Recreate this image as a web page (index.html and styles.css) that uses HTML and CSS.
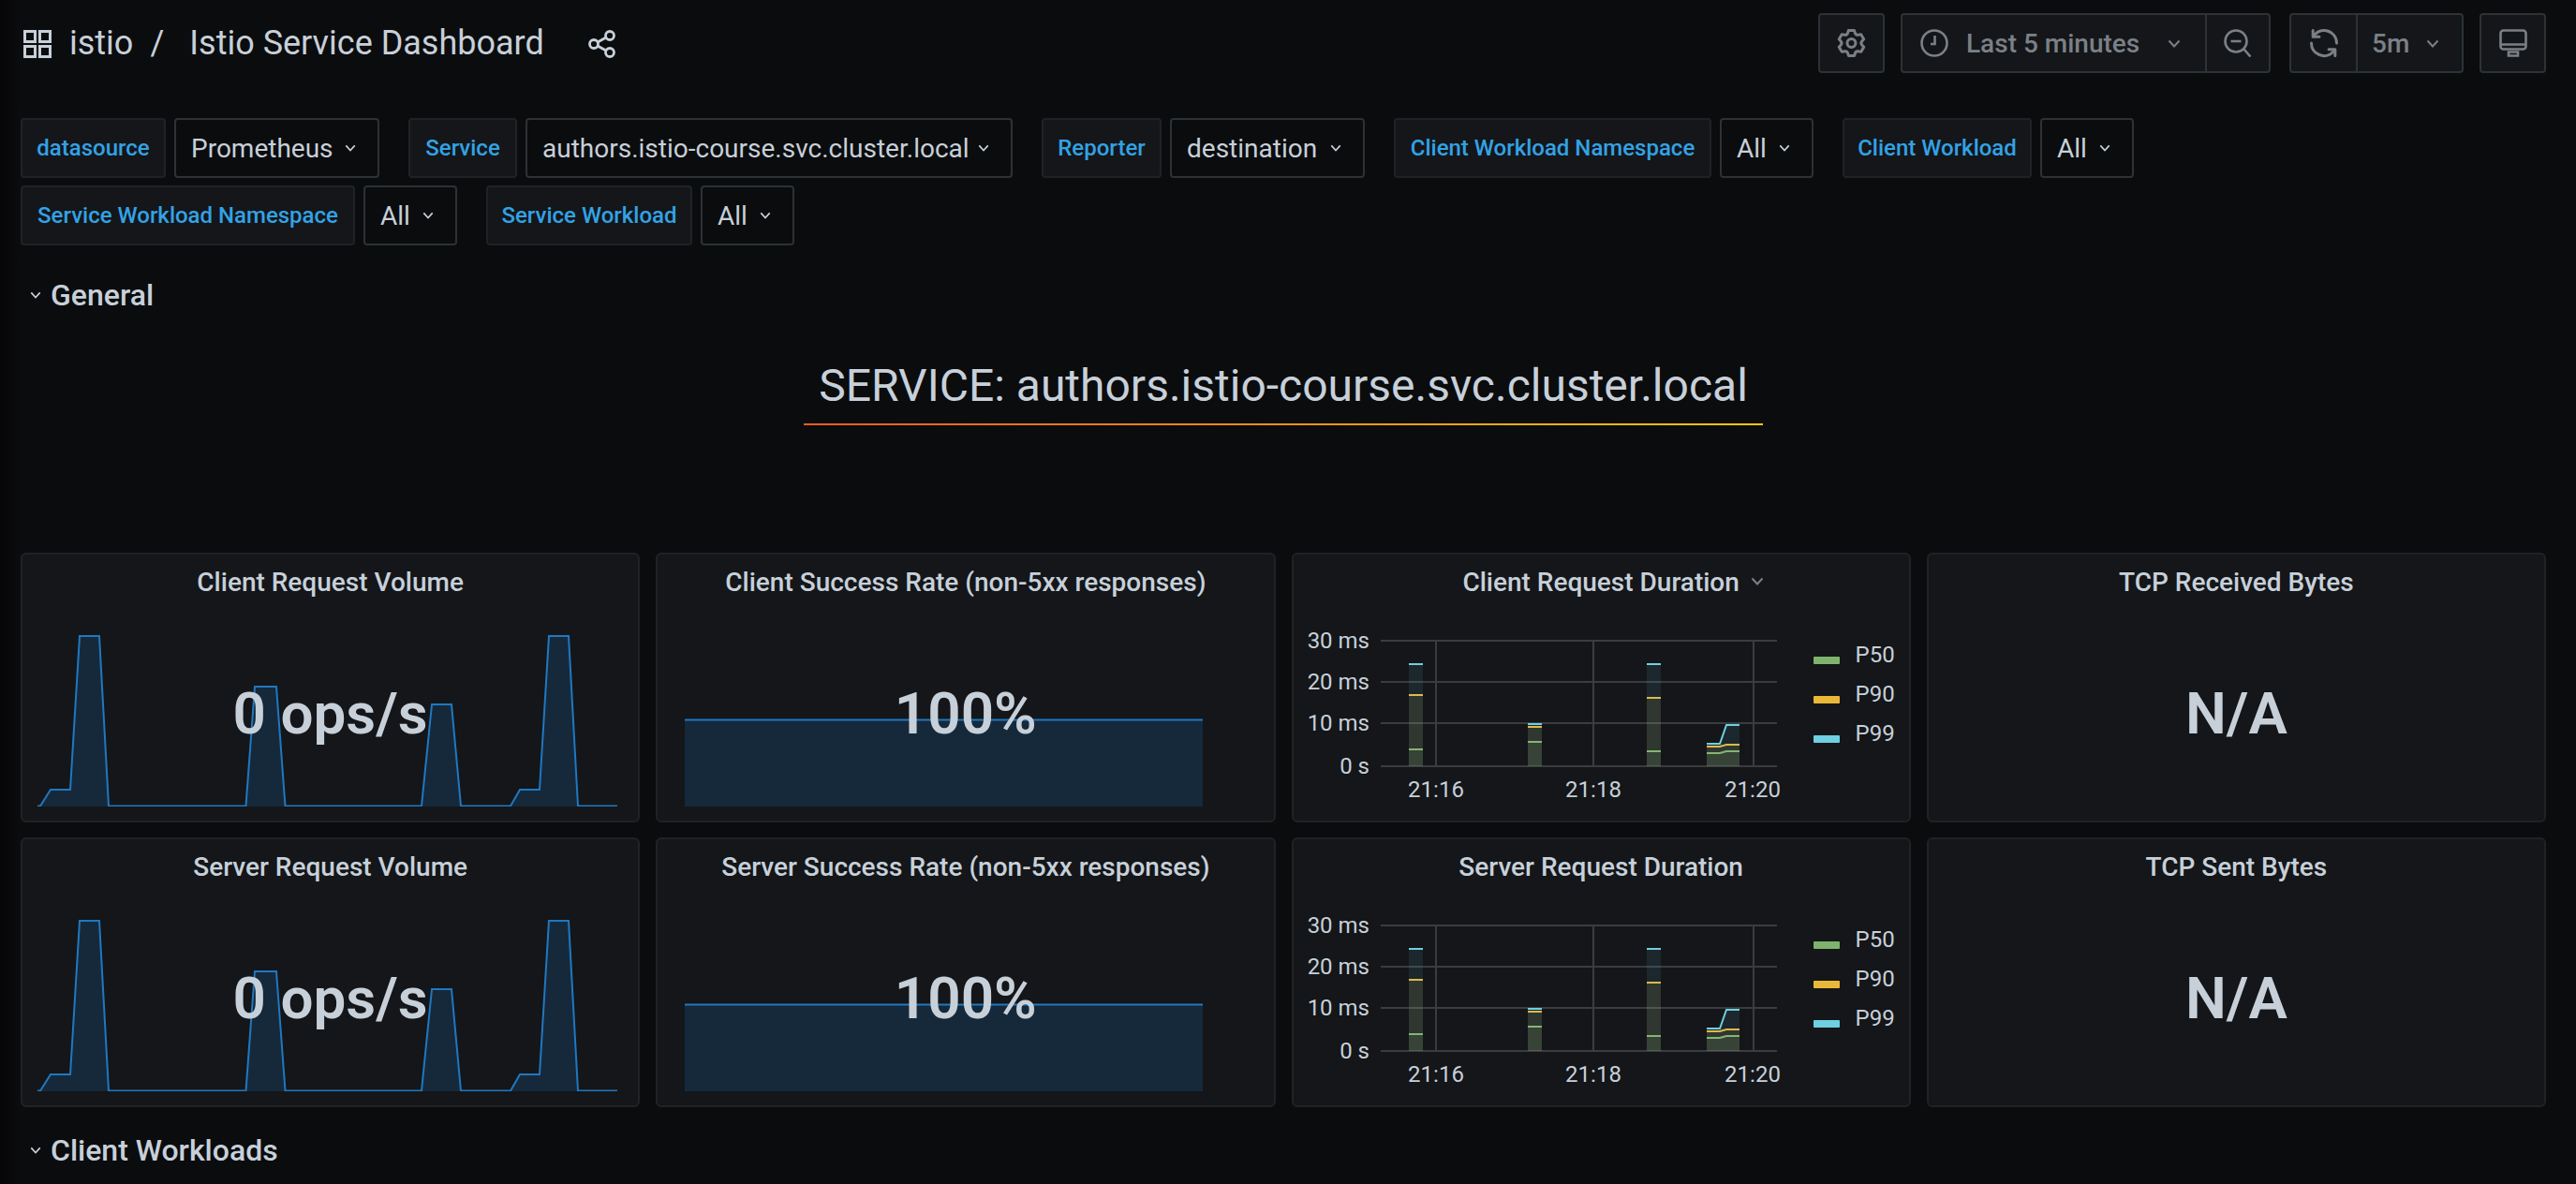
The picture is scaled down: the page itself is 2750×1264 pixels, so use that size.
FILE: index.html
```html
<!DOCTYPE html>
<html lang="en">
<head>
  <meta charset="UTF-8" />
  <title>Istio Service Dashboard</title>
  <link rel="stylesheet" href="styles.css">
</head>
<body>

  <!-- shared drawings, same data in both rows -->
  <svg class="defs" aria-hidden="true">
    <symbol id="chev" viewBox="0 0 14 9">
      <path d="M1.5 1.5 7 7.5l5.5-6" fill="none" stroke="currentColor" stroke-width="2"/>
    </symbol>
    <symbol id="spark" viewBox="0 0 625 210">
      <path class="spark-fill" d="M3 210 14 192H35L45 28H66L76 210ZM222.500 210 232 82H255L264.500 210ZM410 210 421 101H442L452 210ZM505 210 515 192H536L546 28H567L577 210Z"/>
      <path class="spark-line" d="M0 209.500H3L14 192H35L45 28H66L76 209.500H222.500L232 82H255L264.500 209.500H410L421 101H442L452 209.500H505L515 192H536L546 28H567L577 209.500H619"/>
    </symbol>
    <symbol id="flat" viewBox="0 0 625 210">
      <rect class="spark-fill" x="13" y="117" width="553" height="93"/>
      <path class="spark-line" d="M13 117.500H566"/>
    </symbol>
    <symbol id="series" viewBox="0 0 540 210">
      <g class="grid">
        <path d="M78 33H501M78 77H501M78 121H501M78 167H501"/>
        <path d="M137 33V167M305 33V167M476 33V167"/>
      </g>
      <g class="p50">
        <path class="area" d="M108 149H123V167H108ZM235 141H250V167H235ZM362 151H377V167H362ZM426 153H440L447 151H461V167H426Z"/>
        <path class="ln" d="M108 149H123M235 141H250M362 151H377M426 153H440L447 151H461"/>
      </g>
      <g class="p90">
        <path class="area" d="M108 91H123V167H108ZM235 125H250V167H235ZM362 94H377V167H362ZM426 146H440L447 144H461V167H426Z"/>
        <path class="ln" d="M108 91H123M235 125H250M362 94H377M426 146H440L447 144H461"/>
      </g>
      <g class="p99">
        <path class="area" d="M108 58H123V167H108ZM235 122H250V167H235ZM362 58H377V167H362ZM426 143H440L447 123H461V167H426Z"/>
        <path class="ln" d="M108 58H123M235 122H250M362 58H377M426 143H440L447 123H461"/>
      </g>
    </symbol>
  </svg>

  <header class="topbar">
    <div class="crumbs">
      <svg class="ico-grid" viewBox="0 0 30 30" width="30" height="30">
        <path d="M1.500 1.500h11v11h-11zM17.500 1.500h11v11h-11zM1.500 17.500h11v11h-11zM17.500 17.500h11v11h-11z" fill="none" stroke="currentColor" stroke-width="3"/>
      </svg>
      <span class="crumb-folder">istio</span>
      <span class="crumb-sep">/</span>
      <span class="crumb-title">Istio Service Dashboard</span>
      <svg class="ico-share" viewBox="0 0 30 30" width="30" height="30">
        <g fill="none" stroke="currentColor" stroke-width="2.800">
          <circle cx="6" cy="15" r="4.500"/>
          <circle cx="23" cy="6" r="4.500"/>
          <circle cx="23" cy="24" r="4.500"/>
          <path d="M10 13 19 8M10 17l9 5"/>
        </g>
      </svg>
    </div>
    <div class="actions">
      <div class="btn-group group-settings">
        <button class="tbtn icon-only">
          <svg viewBox="0 0 24 24" width="36" height="36"><path fill="currentColor" d="M19.9,12.66a1,1,0,0,1,0-1.32L21.18,9.9a1,1,0,0,0,.12-1.17l-2-3.46a1,1,0,0,0-1.07-.48l-1.88.38a1,1,0,0,1-1.15-.66l-.61-1.83A1,1,0,0,0,13.64,2h-4a1,1,0,0,0-1,.68L8.08,4.51a1,1,0,0,1-1.15.66L5,4.79A1,1,0,0,0,4,5.27L2,8.73A1,1,0,0,0,2.1,9.9l1.27,1.44a1,1,0,0,1,0,1.32L2.1,14.1A1,1,0,0,0,2,15.27l2,3.46a1,1,0,0,0,1.07.48l1.88-.38a1,1,0,0,1,1.15.66l.61,1.83a1,1,0,0,0,1,.68h4a1,1,0,0,0,.95-.68l.61-1.83a1,1,0,0,1,1.15-.66l1.88.38a1,1,0,0,0,1.07-.48l2-3.46a1,1,0,0,0-.12-1.17ZM18.41,14l.8.9-1.28,2.22-1.18-.24a3,3,0,0,0-3.45,2L12.92,20H10.36L10,18.860a3,3,0,0,0-3.45-2l-1.18.24L4.070,14.890l.8-.9a3,3,0,0,0,0-4l-.8-.9L5.350,6.890l1.18.24a3,3,0,0,0,3.45-2L10.360,4h2.560l.38,1.140a3,3,0,0,0,3.45,2l1.18-.24,1.28,2.220-.8.9A3,3,0,0,0,18.410,14ZM11.640,8a4,4,0,1,0,4,4A4,4,0,0,0,11.640,8Zm0,6a2,2,0,1,1,2-2A2,2,0,0,1,11.640,14Z"/></svg>
        </button>
      </div>
      <div class="btn-group">
        <button class="tbtn time">
          <svg viewBox="0 0 30 30" width="30" height="30"><g fill="none" stroke="currentColor" stroke-width="2.600"><circle cx="15" cy="15" r="13.500"/><path d="M15.500 7v9H11"/></g></svg>
          <span>Last 5 minutes</span>
          <svg class="chev" width="14" height="9"><use href="#chev"/></svg>
        </button>
        <button class="tbtn zoom">
          <svg viewBox="0 0 30 30" width="30" height="30"><g fill="none" stroke="currentColor" stroke-width="2.600"><circle cx="13" cy="13" r="11.500"/><path d="M7.500 13h11M21.500 21.500l7 8"/></g></svg>
        </button>
      </div>
      <div class="btn-group group-refresh">
        <button class="tbtn sync">
          <svg viewBox="0 0 24 24" width="36" height="36"><path fill="currentColor" d="M19.910,15.510H15.380a1,1,0,0,0,0,2h2.400A8,8,0,0,1,4,12a1,1,0,0,0-2,0,10,10,0,0,0,16.880,7.230V21a1,1,0,0,0,2,0V16.500A1,1,0,0,0,19.910,15.510ZM12,2A10,10,0,0,0,5.120,4.770V3a1,1,0,0,0-2,0V7.500a1,1,0,0,0,1,1h4.500a1,1,0,0,0,0-2H6.220A8,8,0,0,1,20,12a1,1,0,0,0,2,0A10,10,0,0,0,12,2Z"/></svg>
        </button>
        <button class="tbtn interval">
          <span>5m</span>
          <svg class="chev" width="14" height="9"><use href="#chev"/></svg>
        </button>
      </div>
      <div class="btn-group group-tv">
        <button class="tbtn icon-only">
          <svg viewBox="0 0 30 30" width="30" height="30"><g fill="none" stroke="currentColor" stroke-width="2.600"><rect x="1.500" y="1.500" width="27" height="20" rx="3"/><path d="M1.500 16.500h27M10 24.500h10v4H10z"/></g></svg>
        </button>
      </div>
    </div>
  </header>

  <section class="vars">
    <div class="var-row">
      <div class="var"><label class="var-label l-ds">datasource</label><div class="var-value v-ds">Prometheus<svg class="chev-sm" width="12" height="8"><use href="#chev"/></svg></div></div>
      <div class="var"><label class="var-label l-svc">Service</label><div class="var-value v-svc">authors.istio-course.svc.cluster.local<svg class="chev-sm" width="12" height="8"><use href="#chev"/></svg></div></div>
      <div class="var"><label class="var-label l-rep">Reporter</label><div class="var-value v-rep">destination<svg class="chev-sm" width="12" height="8"><use href="#chev"/></svg></div></div>
      <div class="var"><label class="var-label l-cwn">Client Workload Namespace</label><div class="var-value v-all">All<svg class="chev-sm" width="12" height="8"><use href="#chev"/></svg></div></div>
      <div class="var"><label class="var-label l-cw">Client Workload</label><div class="var-value v-all">All<svg class="chev-sm" width="12" height="8"><use href="#chev"/></svg></div></div>
    </div>
    <div class="var-row">
      <div class="var"><label class="var-label l-swn">Service Workload Namespace</label><div class="var-value v-all">All<svg class="chev-sm" width="12" height="8"><use href="#chev"/></svg></div></div>
      <div class="var"><label class="var-label l-sw">Service Workload</label><div class="var-value v-all">All<svg class="chev-sm" width="12" height="8"><use href="#chev"/></svg></div></div>
    </div>
  </section>

  <div class="row-head first">
    <svg class="chev-row" width="12" height="8"><use href="#chev"/></svg>General
  </div>

  <h2 class="service-title">SERVICE: authors.istio-course.svc.cluster.local</h2>

  <main class="panels">
    <!-- row 1 -->
    <article class="panel">
      <h3 class="panel-title">Client Request Volume</h3>
      <div class="panel-body"><svg class="fill-svg"><use href="#spark"/></svg></div>
      <div class="big">0 ops/s</div>
    </article>
    <article class="panel">
      <h3 class="panel-title">Client Success Rate (non-5xx responses)</h3>
      <div class="panel-body"><svg class="fill-svg"><use href="#flat"/></svg></div>
      <div class="big">100%</div>
    </article>
    <article class="panel">
      <h3 class="panel-title"><span class="title-wrap">Client Request Duration<svg class="title-chev" width="14" height="9"><use href="#chev"/></svg></span></h3>
      <div class="panel-body graph">
        <svg class="plot" viewBox="0 0 540 210" width="540" height="210">
          <use href="#series"/>
          <g class="ylabels">
            <text x="66" y="41">30 ms</text>
            <text x="66" y="85">20 ms</text>
            <text x="66" y="129">10 ms</text>
            <text x="66" y="175">0 s</text>
          </g>
          <g class="xlabels">
            <text x="137" y="200">21:16</text>
            <text x="305" y="200">21:18</text>
            <text x="475" y="200">21:20</text>
          </g>
        </svg>
        <ul class="legend">
          <li><i class="swatch green"></i>P50</li>
          <li><i class="swatch yellow"></i>P90</li>
          <li><i class="swatch cyan"></i>P99</li>
        </ul>
      </div>
    </article>
    <article class="panel">
      <h3 class="panel-title">TCP Received Bytes</h3>
      <div class="panel-body"></div>
      <div class="big">N/A</div>
    </article>

    <!-- row 2 -->
    <article class="panel">
      <h3 class="panel-title">Server Request Volume</h3>
      <div class="panel-body"><svg class="fill-svg"><use href="#spark"/></svg></div>
      <div class="big">0 ops/s</div>
    </article>
    <article class="panel">
      <h3 class="panel-title">Server Success Rate (non-5xx responses)</h3>
      <div class="panel-body"><svg class="fill-svg"><use href="#flat"/></svg></div>
      <div class="big">100%</div>
    </article>
    <article class="panel">
      <h3 class="panel-title">Server Request Duration</h3>
      <div class="panel-body graph">
        <svg class="plot" viewBox="0 0 540 210" width="540" height="210">
          <use href="#series"/>
          <g class="ylabels">
            <text x="66" y="41">30 ms</text>
            <text x="66" y="85">20 ms</text>
            <text x="66" y="129">10 ms</text>
            <text x="66" y="175">0 s</text>
          </g>
          <g class="xlabels">
            <text x="137" y="200">21:16</text>
            <text x="305" y="200">21:18</text>
            <text x="475" y="200">21:20</text>
          </g>
        </svg>
        <ul class="legend">
          <li><i class="swatch green"></i>P50</li>
          <li><i class="swatch yellow"></i>P90</li>
          <li><i class="swatch cyan"></i>P99</li>
        </ul>
      </div>
    </article>
    <article class="panel">
      <h3 class="panel-title">TCP Sent Bytes</h3>
      <div class="panel-body"></div>
      <div class="big">N/A</div>
    </article>
  </main>

  <div class="row-head last">
    <svg class="chev-row" width="12" height="8"><use href="#chev"/></svg>Client Workloads
  </div>

</body>
</html>
```

FILE: styles.css
```css
* {
  box-sizing: border-box;
}
html, body {
  height: 100%;
  overflow: hidden;
}
body {
  margin: 0;
  padding: 14px 32px 0 22px;
  background: linear-gradient(90deg, #050506, #0b0c0e 22px);
  color: #c7d0d9;
  font-family: Roboto, "Liberation Sans", sans-serif;
}
.defs {
  display: none;
}

/* top bar */
.topbar {
  display: flex;
  justify-content: space-between;
  height: 64px;
}
.crumbs {
  display: flex;
  align-items: center;
  font-size: 36px;
}
.ico-grid {
  margin: 2px 19px 0 3px;
}
.crumb-sep {
  margin: 0 27px 0 18px;
}
.ico-share {
  margin: 2px 0 0 47px;
}
.actions {
  display: flex;
  gap: 16px;
}
.group-settings {
  margin-right: 1px;
}
.group-refresh {
  margin-left: 4px;
}
.group-tv {
  margin-left: 1px;
}
.btn-group {
  display: flex;
  background: #141619;
  border: 2px solid #2c3235;
  border-radius: 4px;
}
.tbtn {
  display: flex;
  align-items: center;
  height: 100%;
  padding: 0;
  background: none;
  border: none;
  color: #7b8087;
  font: 500 28px Roboto, "Liberation Sans", sans-serif;
}
.tbtn + .tbtn {
  border-left: 2px solid #2c3235;
}
.icon-only {
  width: 67px;
  justify-content: center;
}
.time {
  width: 323px;
  padding-left: 19px;
}
.time span {
  margin-left: 19px;
}
.time .chev {
  margin-left: 30px;
}
.zoom {
  width: 68px;
  justify-content: center;
}
.sync {
  width: 69px;
  justify-content: center;
}
.interval {
  width: 113px;
  padding-left: 15px;
}
.interval .chev {
  margin-left: 18px;
}

/* template variables */
.vars {
  display: flex;
  flex-direction: column;
  gap: 8px;
  margin-top: 48px;
}
.var-row {
  display: flex;
  gap: 31px;
}
.var {
  display: flex;
  gap: 9px;
}
.var-label,
.var-value {
  display: flex;
  align-items: center;
  height: 64px;
  border-radius: 4px;
}
.var-label {
  justify-content: center;
  background: #141619;
  border: 2px solid #202226;
  color: #33a2e5;
  font-size: 24px;
  font-weight: 500;
}
.var-value {
  justify-content: space-between;
  padding: 0 23px 0 16px;
  background: #0b0c0e;
  border: 2px solid #2c3235;
  font-size: 28px;
}
.l-ds { width: 155px; }
.v-ds { width: 219px; }
.l-svc { width: 116px; }
.v-svc { width: 520px; }
.l-rep { width: 128px; }
.v-rep { width: 208px; }
.l-cwn { width: 339px; }
.l-cw { width: 202px; }
.l-swn { width: 357px; }
.l-sw { width: 220px; }
.v-all { width: 100px; }

/* collapsible rows */
.row-head {
  display: flex;
  align-items: center;
  height: 50px;
  font-size: 32px;
  font-weight: 500;
}
.row-head.first {
  margin-top: 28px;
}
.row-head.last {
  margin-top: 21px;
}
.chev-row {
  margin: 0 10px 0 10px;
}

/* text panel */
.service-title {
  width: 1024px;
  height: 114px;
  margin: 0 auto 136px;
  padding-top: 44px;
  text-align: center;
  font-size: 48px;
  font-weight: 400;
  line-height: 56px;
  background: linear-gradient(90deg, #f05a28, #fbca0a) bottom / 100% 2px no-repeat;
}

/* panels */
.panels {
  display: grid;
  grid-template-columns: repeat(4, minmax(0, 1fr));
  grid-auto-rows: 287.5px;
  gap: 16.5px 17px;
}
.panel {
  position: relative;
  display: flex;
  flex-direction: column;
  min-width: 0;
  background: #141619;
  border: 2px solid #202226;
  border-radius: 6px;
}
.panel-title {
  height: 59px;
  margin: 0;
  text-align: center;
  font-size: 28px;
  font-weight: 500;
  line-height: 60px;
}
.title-wrap {
  position: relative;
}
.title-chev {
  position: absolute;
  top: 11px;
  right: -26px;
  color: #7b8087;
}
.panel-body {
  flex: 1;
  min-width: 0;
  margin: 0 16px 15px;
}
.fill-svg {
  display: block;
  width: 625px;
  height: 210px;
}
.big {
  position: absolute;
  top: 0;
  left: 0;
  right: 0;
  bottom: 0;
  display: flex;
  align-items: center;
  justify-content: center;
  padding-top: 55.5px;
  font-size: 62px;
  font-weight: 600;
}
.spark-fill {
  fill: #1f78c1;
  fill-opacity: 0.2;
}
.spark-line {
  fill: none;
  stroke: #1f78c1;
  stroke-width: 2;
}

/* graph panels */
.graph {
  display: flex;
}
.plot {
  display: block;
  flex: none;
  margin-left: -1px;
  overflow: visible;
  font-size: 24px;
  fill: #c7d0d9;
}
.ylabels text {
  text-anchor: end;
}
.xlabels text {
  text-anchor: middle;
}
.grid path {
  fill: none;
  stroke: #3a3c40;
  stroke-width: 2;
}
.area {
  fill-opacity: 0.1;
}
.ln {
  fill: none;
  stroke-width: 2;
}
.p50 { fill: #7eb26d; stroke: none; }
.p50 .ln { stroke: #7eb26d; }
.p90 { fill: #eab839; }
.p90 .ln { stroke: #eab839; }
.p99 { fill: #6ed0e0; }
.p99 .ln { stroke: #6ed0e0; }

.legend {
  margin: 27px 0 0 0;
  padding: 0;
  list-style: none;
  font-size: 24px;
  line-height: 42px;
}
.legend li {
  display: flex;
  align-items: center;
}
.swatch {
  width: 28px;
  height: 8px;
  margin: 12px 17px 0 0;
  border-radius: 1px;
}
.green { background: #7eb26d; }
.yellow { background: #eab839; }
.cyan { background: #6ed0e0; }
```
